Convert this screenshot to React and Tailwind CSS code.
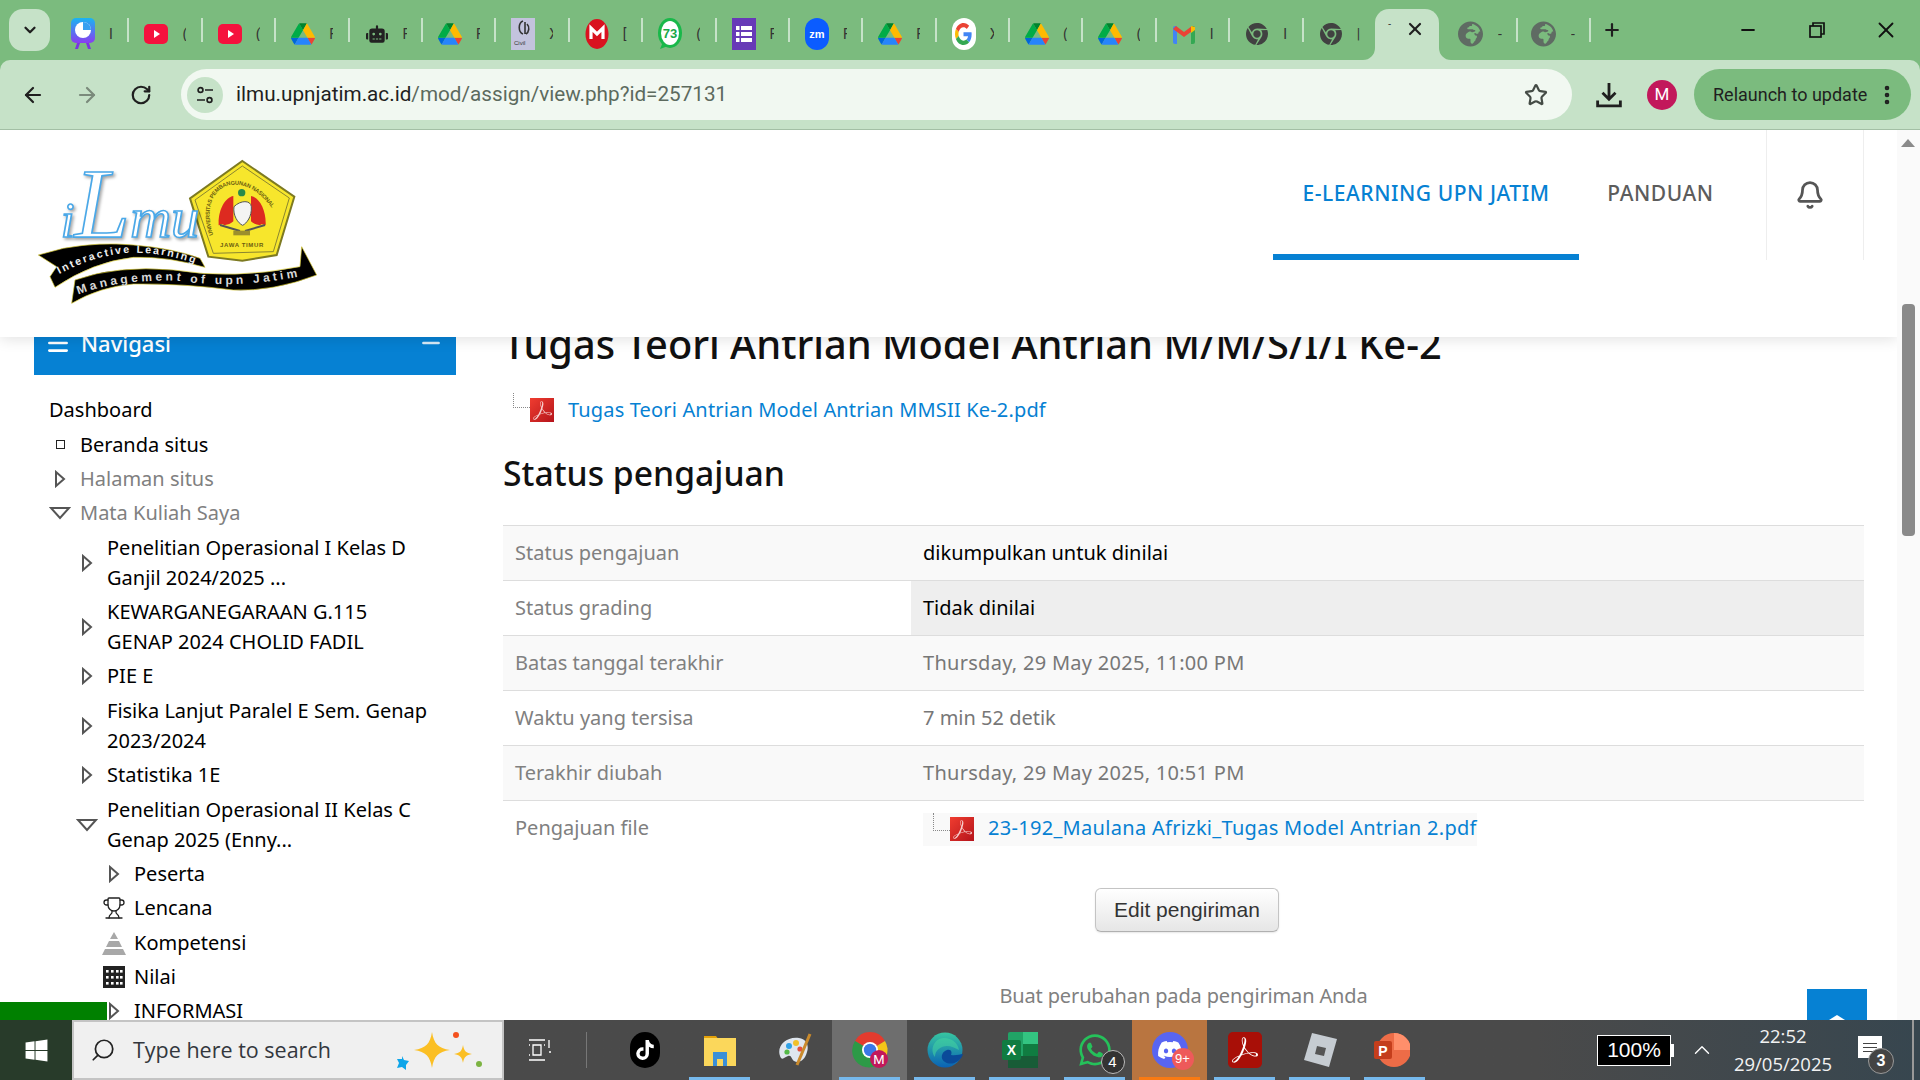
import React from 'react';
import { ArrowLeft, ArrowRight, RotateCw, Star, Plus, X, Minus, ChevronDown, ChevronUp, Bell, Search, Trophy, Menu, EllipsisVertical } from 'lucide-react';
import { FaWhatsapp, FaDiscord, FaTiktok, FaChrome, FaWindows, FaGlobeAfrica, FaRobot } from 'react-icons/fa';
import { SiAdobeacrobatreader } from 'react-icons/si';

function Drive({ c = 'w-[24px] h-[22px]' }) {
  return (
    <svg viewBox="0 0 87.3 78" className={c}>
      <path d="m6.6 66.85 3.85 6.65c.8 1.4 1.95 2.5 3.3 3.3l13.75-23.8h-27.5c0 1.55.4 3.1 1.2 4.5z" fill="#0066da" />
      <path d="m43.65 25-13.75-23.8c-1.35.8-2.5 1.9-3.3 3.3l-25.4 44a9.06 9.06 0 0 0 -1.2 4.5h27.5z" fill="#00ac47" />
      <path d="m73.55 76.8c1.35-.8 2.5-1.9 3.3-3.3l1.6-2.75 7.65-13.25c.8-1.4 1.2-2.95 1.2-4.5h-27.502l5.852 11.5z" fill="#ea4335" />
      <path d="m43.65 25 13.75-23.8c-1.35-.8-2.9-1.2-4.5-1.2h-18.5c-1.6 0-3.15.45-4.5 1.2z" fill="#00832d" />
      <path d="m59.8 53h-32.3l-13.75 23.8c1.35.8 2.9 1.2 4.5 1.2h50.8c1.6 0 3.15-.45 4.5-1.2z" fill="#2684fc" />
      <path d="m73.4 26.5-12.7-22c-.8-1.4-1.95-2.5-3.3-3.3l-13.75 23.8 16.15 28h27.45c0-1.55-.4-3.1-1.2-4.5z" fill="#ffba00" />
    </svg>
  );
}
function Canva() {
  return (
    <svg viewBox="0 0 24 32" className="w-[24px] h-[32px]">
      <defs><linearGradient id="cv" x1="0" y1="0" x2="0" y2="1"><stop offset="0" stopColor="#19b5f1" /><stop offset="1" stopColor="#8a3df0" /></linearGradient></defs>
      <path d="M7 22l-3 9h3l3-9zM17 22l3 9h-3l-3-9z" fill="#7a35e0" />
      <rect x="0" y="0" width="24" height="25" rx="5" fill="url(#cv)" />
      <circle cx="12" cy="12" r="8" fill="#fff" />
      <path d="M12 12V4a8 8 0 0 1 8 8z" fill="#37a0f0" />
    </svg>
  );
}
function YT() {
  return (
    <svg viewBox="0 0 24 24" className="w-[24px] h-[24px]">
      <rect x="0" y="2" width="24" height="20" rx="5" fill="#f5123d" />
      <path d="M10 8l6 4-6 4z" fill="#fff" />
    </svg>
  );
}
function Doc() {
  return (
    <svg viewBox="0 0 24 32" className="w-[24px] h-[32px]">
      <rect width="24" height="32" fill="#c3c3dd" />
      <path d="M12 3c-5 2-5 11 0 13M14 4v12M16 6c3 3 2 8-1 10" stroke="#333" strokeWidth="1.6" fill="none" />
      <text x="3" y="27" fontSize="6" fontFamily="Liberation Sans" fill="#333">Civil</text>
    </svg>
  );
}
function Mega() {
  return (
    <svg viewBox="0 0 24 32" className="w-[24px] h-[32px]">
      <ellipse cx="12" cy="16" rx="11.5" ry="15" fill="#d9121f" />
      <path d="M6 21V10l6 6 6-6v11" stroke="#fff" strokeWidth="3.2" fill="none" />
    </svg>
  );
}
function Wa73() {
  return (
    <svg viewBox="0 0 24 32" className="w-[24px] h-[32px]">
      <ellipse cx="12" cy="15" rx="12" ry="15" fill="#19b84a" />
      <path d="M2 31l3-7 5 4z" fill="#19b84a" />
      <ellipse cx="12" cy="15" rx="9" ry="12" fill="#fff" />
      <text x="12" y="20" fontSize="13" fontFamily="Liberation Sans" fontWeight="700" fill="#19a848" textAnchor="middle">73</text>
    </svg>
  );
}
function Forms() {
  return (
    <svg viewBox="0 0 24 32" className="w-[24px] h-[32px]">
      <rect width="24" height="32" fill="#673ab7" />
      {[8, 14, 20].map((y) => (
        <g key={y}><rect x="4" y={y} width="3.5" height="4" fill="#fff" /><rect x="9" y={y} width="11" height="4" fill="#fff" /></g>
      ))}
    </svg>
  );
}
function Zm() {
  return (
    <div className="w-[24px] h-[32px] rounded-[12px] bg-[#0b5cff] flex items-center justify-center text-white text-[11px] font-bold font-['Liberation_Sans',sans-serif]">zm</div>
  );
}
function Goog() {
  return (
    <div className="w-[24px] h-[32px] rounded-full bg-white flex items-center justify-center">
      <svg viewBox="0 0 48 48" className="w-[17px] h-[22px]" preserveAspectRatio="none">
        <path fill="#EA4335" d="M24 9.5c3.54 0 6.71 1.22 9.21 3.6l6.85-6.85C35.9 2.38 30.47 0 24 0 14.62 0 6.51 5.38 2.56 13.22l7.98 6.19C12.43 13.72 17.74 9.5 24 9.5z" />
        <path fill="#4285F4" d="M46.98 24.55c0-1.57-.15-3.09-.38-4.55H24v9.02h12.94c-.58 2.96-2.26 5.48-4.78 7.18l7.73 6c4.51-4.18 7.09-10.36 7.09-17.65z" />
        <path fill="#FBBC05" d="M10.53 28.59c-.48-1.45-.76-2.99-.76-4.59s.27-3.14.76-4.59l-7.98-6.19C.92 16.46 0 20.12 0 24c0 3.88.92 7.54 2.56 10.78l7.97-6.19z" />
        <path fill="#34A853" d="M24 48c6.48 0 11.93-2.13 15.89-5.81l-7.73-6c-2.15 1.45-4.92 2.3-8.16 2.3-6.26 0-11.57-4.22-13.47-9.91l-7.98 6.19C6.51 42.62 14.62 48 24 48z" />
      </svg>
    </div>
  );
}
function Gmail() {
  return (
    <svg viewBox="0 0 24 24" className="w-[24px] h-[24px]">
      <path d="M1 6a2 2 0 0 1 2-2h2v18H3a2 2 0 0 1-2-2z" fill="#4285f4" />
      <path d="M19 4h2a2 2 0 0 1 2 2v14a2 2 0 0 1-2 2h-2z" fill="#34a853" />
      <path d="M1 7l11 8 11-8-3-3-8 6-8-6z" fill="#ea4335" />
      <path d="M19 4l4 1v3l-4 3z" fill="#fbbc04" />
    </svg>
  );
}
function ChromeGrey() {
  return <FaChrome className="w-[22px] h-[26px] text-[#414141]" />;
}
function Globe() {
  return <FaGlobeAfrica className="-ml-[3px] w-[25px] h-[28px] text-[#5f6b63]" />;
}
function Bot() {
  return <FaRobot className="w-[22px] h-[24px] text-[#222]" />;
}

const tabs = [
  [<Canva />, 'I'], [<YT />, '('], [<YT />, '('], [<Drive />, 'F'], [<Bot />, 'F'], [<Drive />, 'F'],
  [<Doc />, 'X'], [<Mega />, '['], [<Wa73 />, '('], [<Forms />, 'F'], [<Zm />, 'F'], [<Drive />, 'F'],
  [<Goog />, 'X'], [<Drive />, '('], [<Drive />, '('], [<Gmail />, 'I'], [<ChromeGrey />, 'I'],
];

function Tab({ icon, ch, sep = true }) {
  return (
    <div className="w-[73.4px] h-[24px] flex items-center shrink-0 relative">
      <div className="ml-[15px] w-[24px] h-[32px] flex items-center justify-center shrink-0">{icon}</div>
      <div className="ml-[14px] w-[4px] overflow-hidden text-[14px] leading-none text-[#333] font-['Roboto',sans-serif]">{ch}</div>
      {sep && <div className="absolute right-0 top-[-4px] w-[2px] h-[24px] bg-[#c6e2c8]" />}
    </div>
  );
}

function TabStrip() {
  return (
    <div className="h-[60px] bg-[#7bbb7e] flex relative">
      <div className="ml-[9px] mt-[9px] w-[41px] h-[42px] rounded-[14px] bg-[#c6e2c8] flex items-center justify-center shrink-0">
        <ChevronDown className="w-[18px] h-[18px] text-[#1f1f1f]" strokeWidth={3} />
      </div>
      <div className="ml-[6px] flex items-start pt-[22px]">
        {tabs.map(([ic, ch], i) => <Tab key={i} icon={ic} ch={ch} />)}
        <Tab icon={<ChromeGrey />} ch="|" sep={false} />
      </div>
      <div className="mt-[9px] ml-[-2px] w-[64px] h-[51px] bg-[#c6e2c8] rounded-t-[14px] relative flex items-center shrink-0">
        <svg viewBox="0 0 12 12" className="absolute -left-[12px] bottom-0 w-[12px] h-[12px]"><path d="M12 0v12H0a12 12 0 0 0 12-12z" fill="#c6e2c8" /></svg>
        <svg viewBox="0 0 12 12" className="absolute -right-[12px] bottom-0 w-[12px] h-[12px]"><path d="M0 0v12h12A12 12 0 0 1 0 0z" fill="#c6e2c8" /></svg>
        <span className="absolute left-[13px] top-[9px] text-[10px] leading-none text-[#333]">-</span>
        <X className="absolute left-[30px] top-[10px] w-[20px] h-[20px] text-[#1f1f1f]" strokeWidth={2.6} />
      </div>
      <div className="ml-[6px] flex items-start pt-[22px]">
        <div className="w-[70px]"><Tab icon={<Globe />} ch="-" /></div>
        <div className="w-[3px]" />
        <div className="w-[70px]"><Tab icon={<Globe />} ch="-" /></div>
      </div>
      <Plus className="mt-[20px] ml-[14px] w-[20px] h-[20px] text-[#1f1f1f]" strokeWidth={2.6} />
      <div className="ml-auto flex items-start">
        <div className="w-[68px] h-[60px] flex items-center justify-center"><Minus className="w-[20px] h-[20px] text-[#111]" strokeWidth={2.6} /></div>
        <div className="w-[69px] h-[60px] flex items-center justify-center">
          <svg viewBox="0 0 16 16" className="w-[16px] h-[16px]" fill="none" stroke="#111" strokeWidth="1.7"><rect x="1" y="4" width="11" height="11" /><path d="M4 4V1h11v11h-3" /></svg>
        </div>
        <div className="w-[69px] h-[60px] flex items-center justify-center"><X className="w-[26px] h-[26px] text-[#111]" strokeWidth={1.7} /></div>
      </div>
    </div>
  );
}

function Toolbar() {
  return (
    <div className="h-[70px] bg-[#7bbb7e]">
      <div className="h-[70px] bg-[#c6e2c8] rounded-t-[10px] border-b border-[#a3bfa5] flex items-center">
        <div className="w-[66px] flex justify-center"><ArrowLeft className="w-[24px] h-[24px] text-[#1f1f1f]" strokeWidth={2.2} /></div>
        <div className="w-[54px] -ml-[6px] flex justify-center"><ArrowRight className="w-[24px] h-[24px] text-[#7a8a7b]" strokeWidth={2.2} /></div>
        <div className="w-[54px] flex justify-center"><RotateCw className="w-[22px] h-[22px] text-[#1f1f1f]" strokeWidth={2.4} /></div>
        <div className="ml-[13px] w-[1391px] h-[51px] rounded-full bg-[#f1f8f1] flex items-center">
          <div className="ml-[6px] w-[36px] h-[36px] rounded-full bg-[#c6e2c8] flex items-center justify-center">
            <svg viewBox="0 0 20 20" className="w-[20px] h-[20px]" fill="none" stroke="#1f1f1f" strokeWidth="1.7">
              <circle cx="5.5" cy="5" r="2.4" /><path d="M10 5h8M2 15h8" /><circle cx="14.5" cy="15" r="2.4" />
            </svg>
          </div>
          <div className="ml-[13px] text-[20.7px] leading-none font-['Roboto',sans-serif] text-[#1f1f1f] whitespace-nowrap">
            ilmu.upnjatim.ac.id<span className="text-[#5c6a5e]">/mod/assign/view.php?id=257131</span>
          </div>
          <Star className="ml-auto mr-[24px] w-[24px] h-[24px] text-[#444b45]" strokeWidth={2.2} />
        </div>
        <div className="ml-[23px] w-[28px] flex justify-center">
          <svg viewBox="0 0 24 24" className="w-[26px] h-[26px]" fill="none" stroke="#1f1f1f" strokeWidth="2.6"><path d="M12 1v14M6 10l6 6 6-6" /><path d="M1.5 17v5h21v-5" /></svg>
        </div>
        <div className="ml-[24px] w-[30px] h-[30px] rounded-full bg-[#c2185b] text-white text-[17px] flex items-center justify-center font-['Roboto',sans-serif]">M</div>
        <div className="ml-[17px] w-[217px] h-[51px] rounded-full bg-[#7bbb7e] flex items-center">
          <span className="ml-[19px] text-[18px] text-[#1f1f1f] font-['Roboto',sans-serif] whitespace-nowrap">Relaunch to update</span>
          <EllipsisVertical className="ml-auto mr-[12px] w-[24px] h-[24px] text-[#1f1f1f]" strokeWidth={2.6} />
        </div>
      </div>
    </div>
  );
}

function Logo() {
  return (
    <svg viewBox="90 60 960 540" className="w-[320px] h-[180px] block">
      <defs>
        <path id="rb1" d="M178 432Q290 372 400 368Q500 368 592 404" />
        <path id="rb2" d="M235 494Q350 448 530 452Q700 478 895 440" />
        <path id="ring" d="M640 315C590 170 720 100 820 240" />
      </defs>
      <path d="M727 93L883 200L830 375L727 392L625 380L570 205Z" fill="#f7e62c" stroke="#7d7a22" strokeWidth="6" />
      <path d="M727 108L868 204L820 365L640 370L585 210Z" fill="none" stroke="#8a8530" strokeWidth="3" />
      <text fontFamily="Liberation Sans" fontSize="17" fill="#6b5d10" fontWeight="700"><textPath href="#ring" textLength="330">UNIVERSITAS PEMBANGUNAN NASIONAL</textPath></text>
      <text x="725" y="352" textAnchor="middle" fontFamily="Liberation Sans" fontSize="18" fontWeight="700" fill="#6b5d10" textLength="130">JAWA TIMUR</text>
      <circle cx="725" cy="188" r="11" fill="#2a8a4a" />
      <path d="M700 198c-24 4-46 40-44 88l12-4c4 6 22 2 32-8zM753 198c24 4 46 40 44 88l-12-4c-4 6-22 2-32-8z" fill="#dd2a20" />
      <path d="M702 230c20-20 50-20 52 0c2 30-14 50-26 56c-14-6-30-30-26-56z" fill="#f4f4f4" stroke="#555" strokeWidth="3" />
      <path d="M660 285l60 18M795 285l-60 18" stroke="#555" strokeWidth="6" />
      <rect x="700" y="302" width="50" height="14" fill="#9c8f2c" />
      <text x="182" y="322" fontFamily="Liberation Serif" fontStyle="italic" fontSize="300" fill="#fff" stroke="#4aa8e8" strokeWidth="5" style={{ filter: 'drop-shadow(5px 6px 4px rgba(0,0,0,.35))' }}>
        <tspan fontSize="150">i</tspan>L<tspan fontSize="170">mu</tspan>
      </text>
      <path d="M215 520L225 450Q350 405 520 420Q700 450 900 410L905 350L950 435Q820 485 700 480Q550 460 400 462Q300 470 215 520Z" fill="#000" stroke="#d8c92c" strokeWidth="2" />
      <path d="M115 375L190 355Q300 335 400 345Q520 355 600 385L615 412Q500 378 400 382Q280 395 165 472L150 440L170 410Z" fill="#000" stroke="#d8c92c" strokeWidth="2" />
      <text fontFamily="Liberation Sans" fontSize="32" fill="#eee" fontWeight="700"><textPath href="#rb1" textLength="420">Interactive Learning</textPath></text>
      <text fontFamily="Liberation Sans" fontSize="36" fill="#d8d8d8" fontWeight="700"><textPath href="#rb2" textLength="665">Management of upn Jatim</textPath></text>
    </svg>
  );
}

function Header() {
  return (
    <header className="relative z-10 h-[207px] bg-white shadow-[0_2px_14px_rgba(0,0,0,0.12)] flex items-start">
      <div className="ml-[30px] mt-[20px]"><Logo /></div>
      <nav className="ml-auto flex items-start text-[21px] font-medium tracking-[0.55px]">
        <div className="w-[306px] h-[130px] pt-[4px] border-b-[6px] border-[#0681d3] text-[#0681d3] flex items-center justify-center whitespace-nowrap">E-LEARNING UPN JATIM</div>
        <div className="ml-[30px] w-[103px] h-[124px] pt-[4px] text-[#5c5c5c] flex items-center justify-center whitespace-nowrap">PANDUAN</div>
        <div className="ml-[54px] w-[98px] h-[130px] pr-[10px] border-x border-[#eeeeee] flex items-center justify-center">
          <Bell className="w-[30px] h-[30px] text-[#555]" strokeWidth={2.2} />
        </div>
        <div className="w-[33px]" />
      </nav>
    </header>
  );
}

function Tri({ down }) {
  return down ? (
    <svg viewBox="0 0 22 14" className="w-[22px] h-[14px]"><path d="M2 2h18L11 12z" fill="#fff" stroke="#555" strokeWidth="2" /></svg>
  ) : (
    <svg viewBox="0 0 12 18" className="w-[12px] h-[18px]"><path d="M2 2v14l8-7z" fill="#fff" stroke="#555" strokeWidth="2" /></svg>
  );
}
const tree = [
  { t: 'Dashboard', pl: 'pl-[15px]' },
  { t: 'Beranda situs', pl: 'pl-[12px]', i: <div className="w-[9px] h-[9px] border-[1.5px] border-[#222]" /> },
  { t: 'Halaman situs', pl: 'pl-[12px]', i: <Tri />, gray: true },
  { t: 'Mata Kuliah Saya', pl: 'pl-[12px]', i: <Tri down />, gray: true },
  { t: 'Penelitian Operasional I Kelas D Ganjil 2024/2025 ...', pl: 'pl-[39px]', i: <Tri /> },
  { t: 'KEWARGANEGARAAN G.115 GENAP 2024 CHOLID FADIL', pl: 'pl-[39px]', i: <Tri /> },
  { t: 'PIE E', pl: 'pl-[39px]', i: <Tri /> },
  { t: 'Fisika Lanjut Paralel E Sem. Genap 2023/2024', pl: 'pl-[39px]', i: <Tri /> },
  { t: 'Statistika 1E', pl: 'pl-[39px]', i: <Tri /> },
  { t: 'Penelitian Operasional II Kelas C Genap 2025 (Enny...', pl: 'pl-[39px]', i: <Tri down /> },
  { t: 'Peserta', pl: 'pl-[66px]', i: <Tri /> },
  { t: 'Lencana', pl: 'pl-[66px]', i: <Trophy className="w-[24px] h-[24px] text-[#222]" strokeWidth={1.3} /> },
  {
    t: 'Kompetensi', pl: 'pl-[66px]',
    i: <svg viewBox="0 0 24 24" className="w-[24px] h-[24px]"><path d="M12 1l4 7H8zM7 10h10l3 6H4zM3 18h18l3 6H0z" fill="#a8a8a8" /></svg>,
  },
  {
    t: 'Nilai', pl: 'pl-[66px]',
    i: <svg viewBox="0 0 22 22" className="w-[22px] h-[22px]"><rect width="22" height="22" fill="#222" />{[5, 11, 17].map((y) => [4, 9, 14, 18].map((x) => <rect key={x + '-' + y} x={x - 1} y={y - 1} width="2.6" height="2.6" fill="#fff" />))}</svg>,
  },
  { t: 'INFORMASI', pl: 'pl-[66px]', i: <Tri /> },
];

function Sidebar() {
  return (
    <aside className="ml-[34px] w-[422px] shrink-0">
      <div className="-mt-[32px] h-[70px] bg-[#0681d3] flex items-center pt-[6px] text-white">
        <Menu className="ml-[11px] w-[26px] h-[26px]" strokeWidth={2.4} />
        <span className="ml-[10px] text-[22px] font-medium">Navigasi</span>
        <Minus className="ml-auto mr-[12px] w-[26px] h-[26px] text-[#d9ecf8]" strokeWidth={2.4} />
      </div>
      <ul className="mt-[18px] text-[20px] leading-[30px] text-black">
        {tree.map((r) => (
          <li key={r.t} className={`${r.pl} py-[2.2px] pr-[22px] flex items-center`}>
            {r.i && <span className="w-[34px] shrink-0 flex items-center"><span className="w-[28px] flex justify-center">{r.i}</span></span>}
            <span className={r.gray ? 'text-[#808080]' : ''}>{r.t}</span>
          </li>
        ))}
      </ul>
    </aside>
  );
}

function Pdf() {
  return (
    <div className="w-[24px] h-[24px] bg-gradient-to-br from-[#f03c30] to-[#b5121b] flex items-center justify-center shrink-0">
      <SiAdobeacrobatreader className="w-[19px] h-[19px] text-[#f6d0cf]" />
    </div>
  );
}
const rows = [
  ['Status pengajuan', 'dikumpulkan untuk dinilai', 'bg-[#f9f9f9]', 'text-black', ''],
  ['Status grading', 'Tidak dinilai', 'bg-white', 'text-black', 'bg-[#eeeeee]'],
  ['Batas tanggal terakhir', 'Thursday, 29 May 2025, 11:00 PM', 'bg-[#f9f9f9]', 'text-[#777777] tracking-[0.28px]', ''],
  ['Waktu yang tersisa', '7 min 52 detik', 'bg-white', 'text-[#777777]', ''],
  ['Terakhir diubah', 'Thursday, 29 May 2025, 10:51 PM', 'bg-[#f9f9f9]', 'text-[#777777] tracking-[0.28px]', ''],
];

function Main() {
  return (
    <main className="ml-[47px] w-[1361px] shrink-0">
      <h1 className="-mt-[17px] text-[39.8px] leading-[48px] font-medium text-[#111] whitespace-nowrap">Tugas Teori Antrian Model Antrian M/M/S/I/I Ke-2</h1>
      <div className="mt-[27px] ml-[10px] flex items-start h-[30px]">
        <div className="w-[17px] h-[15px] -mt-[2px] border-l border-b border-dotted border-[#888]" />
        <div className="mt-[3px]"><Pdf /></div>
        <a className="ml-[14px] text-[20px] leading-[30px] tracking-[0.16px] text-[#0681d3]">Tugas Teori Antrian Model Antrian MMSII Ke-2.pdf</a>
      </div>
      <h2 className="mt-[26px] text-[33.7px] leading-[44px] font-medium text-[#111]">Status pengajuan</h2>
      <div className="mt-[30px] text-[20px]">
        {rows.map(([a, b, bg, col, cell]) => (
          <div key={a} className={`h-[55px] border-t border-[#dddddd] flex ${bg}`}>
            <div className="w-[408px] pl-[12px] flex items-center text-[#808080]">{a}</div>
            <div className={`flex-1 pl-[12px] flex items-center ${col} ${cell}`}>{b}</div>
          </div>
        ))}
        <div className="h-[55px] border-t border-[#dddddd] flex">
          <div className="w-[408px] pl-[12px] flex items-center text-[#808080]">Pengajuan file</div>
          <div className="flex-1 pl-[12px] pt-[12px]">
            <div className="flex w-fit h-[33px] items-start bg-[#f9f9f9]">
              <div className="ml-[10px] w-[17px] h-[18px] border-l border-b border-dotted border-[#888]" />
              <div className="mt-[4px]"><Pdf /></div>
              <span className="ml-[14px] leading-[30px] tracking-[0.3px] text-[#0681d3] whitespace-nowrap">23-192_Maulana Afrizki_Tugas Model Antrian 2.pdf</span>
            </div>
          </div>
        </div>
      </div>
      <div className="mt-[33px] flex justify-center pl-[7px]">
        <button className="w-[184px] h-[44px] rounded-[6px] border border-[#c4c4c4] border-b-[#b0b0b0] bg-gradient-to-b from-white to-[#e6e6e6] text-[21px] text-[#333] font-['Liberation_Sans',sans-serif] shadow-[0_1px_2px_rgba(0,0,0,0.1)]">Edit pengiriman</button>
      </div>
      <p className="mt-[49px] text-center text-[20px] leading-[30px] tracking-[-0.14px] text-[#808080]">Buat perubahan pada pengiriman Anda</p>
    </main>
  );
}

function Scrollbar() {
  return (
    <div className="w-[23px] bg-[#fafafa] shrink-0 relative flex flex-col items-center">
      <div className="mt-[9px] ml-[-1px] w-0 h-0 border-x-[7px] border-x-transparent border-b-[8px] border-b-[#8a8a8a]" />
      <div className="mt-[157px] ml-[-1px] w-[13px] h-[232px] bg-[#8a8a8a] rounded-[4px]" />
    </div>
  );
}

function Chrome() {
  return (
    <svg viewBox="0 0 36 36" className="w-[36px] h-[36px]">
      <path d="M18 18L3 9A17 17 0 0 1 33 9z" fill="#e33b2e" />
      <path d="M18 18L33 9A17 17 0 0 1 24 34z" fill="#f5c518" />
      <path d="M18 18L24 34A17 17 0 0 1 3 9z" fill="#2d9a47" />
      <circle cx="18" cy="18" r="8" fill="#fff" /><circle cx="18" cy="18" r="6.2" fill="#3b78e7" />
      <circle cx="27" cy="27" r="9" fill="#c2185b" />
      <text x="27" y="32" textAnchor="middle" fontSize="13" fill="#fff" fontFamily="Roboto">M</text>
    </svg>
  );
}
function Edge() {
  return (
    <svg viewBox="0 0 36 36" className="w-[36px] h-[36px]">
      <defs><linearGradient id="ed" x1="0" y1="0" x2="0" y2="1"><stop offset="0" stopColor="#37c6a0" /><stop offset="1" stopColor="#0a62b5" /></linearGradient></defs>
      <circle cx="18" cy="18" r="17.5" fill="url(#ed)" />
      <path d="M36 22c-2 8-12 12-18 8c-5-3-4-10 2-12c5-1 5 3 4 5c5 1 9-1 12-1z" fill="#0a4a99" />
      <path d="M20 14c-6 0-12 4-12 11c-6-8 0-19 9-19c8 0 14 5 15 12c-4-2-8-4-12-4z" fill="#46d6a0" opacity=".55" />
    </svg>
  );
}
function Excel() {
  return (
    <svg viewBox="0 0 36 36" className="w-[36px] h-[36px]">
      <rect x="6" y="0" width="30" height="36" rx="2" fill="#21a366" />
      <rect x="21" y="0" width="15" height="12" fill="#33c481" /><rect x="21" y="12" width="15" height="12" fill="#107c41" />
      <rect x="6" y="24" width="30" height="12" fill="#185c37" />
      <rect x="0" y="8" width="19" height="20" rx="2" fill="#107c41" />
      <text x="9.5" y="23" textAnchor="middle" fontSize="14" fontWeight="700" fill="#fff" fontFamily="Liberation Sans">X</text>
    </svg>
  );
}
function Folder() {
  return (
    <svg viewBox="0 0 36 36" className="w-[36px] h-[36px]">
      <path d="M2 4h12l3 4H2z" fill="#e3a008" />
      <rect x="2" y="6" width="32" height="28" fill="#fbd75b" />
      <path d="M11 34V20h14v14h-4v-7h-6v7z" fill="#3b90d8" />
      <rect x="15" y="28" width="6" height="6" fill="#fbd75b" />
    </svg>
  );
}
function Palette() {
  return (
    <svg viewBox="0 0 36 36" className="w-[36px] h-[36px]">
      <path d="M4 26C-2 16 8 4 22 6c8 1 10 8 8 14-2 8-8 12-13 9-3-2-2-6-6-5-3 1-5 4-7 2z" fill="#dfe6ee" />
      <circle cx="12" cy="14" r="3" fill="#2fa1e6" /><circle cx="19" cy="11" r="3" fill="#f2c029" /><circle cx="10" cy="20" r="2.6" fill="#54b948" /><circle cx="23" cy="17" r="2.6" fill="#e3503e" />
      <path d="M33 2L20 33" stroke="#c98a2c" strokeWidth="3" />
    </svg>
  );
}
function Ppt() {
  return (
    <svg viewBox="0 0 36 36" className="w-[36px] h-[36px]">
      <circle cx="20" cy="18" r="17" fill="#ed6c47" /><path d="M20 1a17 17 0 0 1 17 17H20z" fill="#ff8f6b" />
      <rect x="0" y="9" width="18" height="18" rx="2" fill="#c43e1c" />
      <text x="9" y="24" textAnchor="middle" fontSize="14" fontWeight="700" fill="#fff" fontFamily="Liberation Sans">P</text>
    </svg>
  );
}
function Roblox() {
  return (
    <svg viewBox="0 0 36 36" className="w-[36px] h-[36px]">
      <path d="M10 1l25 6-8 28-25-7z" fill="#c6ccd2" /><path d="M15 14l9 2-2 8-9-2z" fill="#555" />
    </svg>
  );
}

const apps = [
  { ic: <div className="w-[30px] h-[36px] rounded-full bg-black flex items-center justify-center"><FaTiktok className="w-[18px] h-[20px] text-white" /></div> },
  { ic: <Folder />, u: 'bg-[#76b9ed]' },
  { ic: <Palette /> },
  { ic: <Chrome />, bg: 'bg-[#6e6e6e]', u: 'bg-[#76b9ed]' },
  { ic: <Edge />, u: 'bg-[#76b9ed]' },
  { ic: <Excel />, u: 'bg-[#76b9ed]' },
  {
    ic: (
      <div className="relative">
        <FaWhatsapp className="w-[36px] h-[36px] text-[#25c15a]" />
        <div className="absolute -right-[12px] -bottom-[6px] w-[24px] h-[24px] rounded-full bg-[#333] border border-[#bbb] text-white text-[15px] flex items-center justify-center font-['Liberation_Sans',sans-serif]">4</div>
      </div>
    ),
    u: 'bg-[#76b9ed]',
  },
  {
    ic: (
      <div className="relative w-[36px] h-[36px] rounded-full bg-[#5865f2] flex items-center justify-center">
        <FaDiscord className="w-[26px] h-[26px] text-white" />
        <div className="absolute -right-[6px] -bottom-[2px] w-[22px] h-[22px] rounded-full bg-[#ee5a5a] text-white text-[13px] flex items-center justify-center font-['Liberation_Sans',sans-serif]">9+</div>
      </div>
    ),
    bg: 'bg-[#b97540]', u: 'bg-[#f97a12]',
  },
  { ic: <div className="w-[34px] h-[36px] rounded-[5px] bg-[#a80f07] flex items-center justify-center"><SiAdobeacrobatreader className="w-[26px] h-[26px] text-white" /></div>, u: 'bg-[#76b9ed]' },
  { ic: <Roblox />, u: 'bg-[#76b9ed]' },
  { ic: <div className="-ml-[5px]"><Ppt /></div>, u: 'bg-[#76b9ed]' },
];

function Taskbar() {
  return (
    <div className="h-[60px] bg-gradient-to-r from-[#4a4a4a] via-[#4a4a4a] via-80% to-[#37464f] flex text-white">
      <div className="w-[72px] bg-[#283b2a] flex items-center justify-center"><FaWindows className="w-[25px] h-[25px] text-white" /></div>
      <div className="w-[432px] border-[2px] border-[#c4c4c4] bg-[#f0f0f0] flex items-center relative">
        <Search className="ml-[16px] w-[26px] h-[26px] text-[#222] -scale-x-100" strokeWidth={1.6} />
        <span className="ml-[17px] text-[21.5px] text-[#33373d] font-['Open_Sans',sans-serif]">Type here to search</span>
        <svg viewBox="0 0 95 40" className="absolute left-[322px] top-[10px] w-[95px] h-[40px]">
          <path d="M36 0c2 12 6 16 18 18c-12 2-16 6-18 18c-2-12-6-16-18-18c12-2 16-6 18-18z" fill="#fbbf24" />
          <path d="M67 13c1 6 3 8 9 9c-6 1-8 3-9 9c-1-6-3-8-9-9c6-1 8-3 9-9z" fill="#fbbf24" />
          <path d="M6 24l2 4 5 1-3 4 0 5-4-3-5 1 2-5-2-4 5 0z" fill="#0ea5e9" />
          <circle cx="60" cy="3" r="3" fill="#f4511e" /><circle cx="83" cy="32" r="3" fill="#7cb342" />
        </svg>
      </div>
      <div className="w-[83px] h-[60px] flex items-center relative">
        <svg viewBox="0 0 24 24" className="ml-[24px] w-[24px] h-[24px]" fill="none" stroke="#fff" strokeWidth="1.3"><path d="M1 2h16M5 7h8v10H5zM1 22h16M1 7h1M1 17h1M17 7h-1M21 2v8M21 14h2" /></svg>
        <div className="absolute right-0 top-[12px] w-px h-[36px] bg-[#777]" />
      </div>
      <div className="w-[20px]" />
      <div className="flex">
        {apps.map((a, i) => (
          <div key={i} className={`w-[75px] h-[60px] relative flex items-center justify-center ${a.bg || ''}`}>
            {a.ic}
            {a.u && <div className={`absolute bottom-0 left-[7px] right-[7px] h-[3px] ${a.u}`} />}
          </div>
        ))}
      </div>
      <div className="ml-auto flex items-center">
        <div className="w-[74px] h-[31px] bg-black border-[1.5px] border-white flex items-center justify-center text-[21px] font-['Liberation_Sans',sans-serif] relative">
          100%
          <div className="absolute -right-[4px] top-[8px] w-[3px] h-[13px] bg-white" />
        </div>
        <ChevronUp className="ml-[18px] w-[26px] h-[26px] text-white" strokeWidth={1.3} />
        <div className="ml-[13px] w-[110px] text-center text-[18.5px] leading-[28px] text-[#f2f2f2] font-['Open_Sans',sans-serif]">
          <div>22:52</div><div className="whitespace-nowrap">29/05/2025</div>
        </div>
        <div className="ml-[20px] relative w-[24px] h-[22px] bg-white flex flex-col justify-center gap-[3px] px-[5px] -mt-[6px]">
          <div className="h-px bg-[#444]" /><div className="h-px bg-[#444]" /><div className="h-px bg-[#444]" />
          <div className="absolute -right-[12px] -bottom-[16px] w-[26px] h-[26px] rounded-full bg-[#444] border border-[#999] text-white font-bold text-[16px] flex items-center justify-center font-['Liberation_Sans',sans-serif]">3</div>
        </div>
        <div className="ml-[30px] w-[2px] h-[60px] bg-[#999]" />
        <div className="w-[6px]" />
      </div>
    </div>
  );
}

export default function App() {
  return (
    <div className="w-[1920px] h-[1080px] overflow-hidden flex flex-col font-['Noto_Sans',sans-serif]">
      <TabStrip />
      <Toolbar />
      <div className="h-[890px] flex">
        <div className="flex-1 min-w-0 bg-white relative overflow-hidden">
          <Header />
          <div className="flex h-[683px]">
            <Sidebar />
            <Main />
          </div>
          <div className="absolute left-0 bottom-0 w-[107px] h-[18px] bg-[#008000]" />
          <div className="absolute left-[1807px] bottom-0 w-[60px] h-[31px] bg-[#0681d3] flex justify-center items-end overflow-hidden">
            <div className="w-[16px] h-[5px] bg-white [clip-path:polygon(50%_0,100%_100%,0_100%)]" />
          </div>
        </div>
        <Scrollbar />
      </div>
      <Taskbar />
    </div>
  );
}
